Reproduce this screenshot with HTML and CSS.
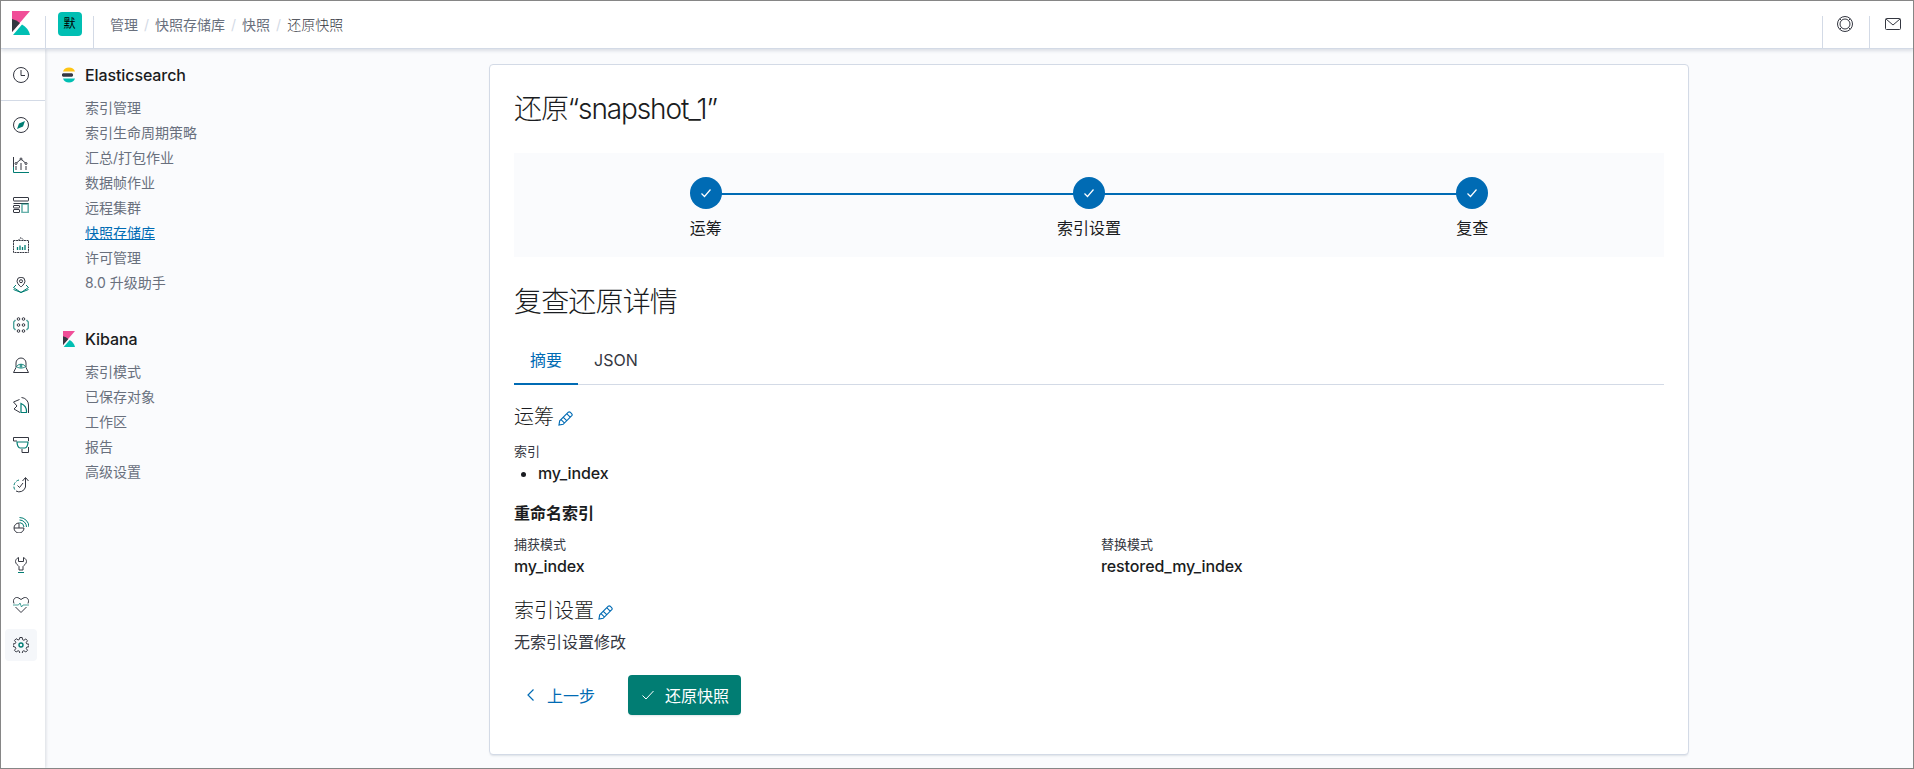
FILE: index.html
```html
<!DOCTYPE html>
<html lang="zh">
<head>
  <meta charset="UTF-8">
  <title>还原快照 - Kibana</title>
  <link rel="stylesheet" href="styles.css">
</head>
<body>

<header class="topbar">
  <div class="top-logo">
    <svg width="18" height="24" viewBox="0 0 18 24"><path fill="#f04e98" d="M0 0h18L0 21z"/><path fill="#343741" d="M0 8v13l8-9a16 16 0 0 0-8-4z"/><path fill="#00bfb3" d="M10 13.5 1 24h17a16 16 0 0 0-8-10.5z"/></svg>
  </div>
  <div class="space-cell"><span class="space-badge">默</span></div>
  <nav class="crumbs">
    <a>管理</a><i>/</i><a>快照存储库</a><i>/</i><a>快照</a><i>/</i><b>还原快照</b>
  </nav>
  <div class="top-right">
    <div class="top-btn">
      <svg width="16" height="16" viewBox="0 0 16 16" fill="none" stroke="#343741"><circle cx="8" cy="8" r="7.5"/><circle cx="8" cy="8" r="5"/><path d="M2.700 2.700l1.800 1.800M13.300 2.700l-1.800 1.800M2.700 13.300l1.800-1.800M13.300 13.300l-1.800-1.800"/></svg>
    </div>
    <div class="top-btn last">
      <svg width="16" height="12" viewBox="0 0 16 12" fill="none" stroke="#343741"><rect x=".5" y=".5" width="15" height="11" rx="1"/><path d="M1 1l7 6 7-6"/></svg>
    </div>
  </div>
</header>

<div class="main">
  <aside class="rail">
    <div class="rail-top">
      <svg class="ico" viewBox="0 0 16 16" fill="none" stroke="#343741"><circle cx="8" cy="8" r="7.5"/><path d="M8 3v5.5h4"/></svg>
    </div>
    <div class="rail-list">
      <span class="rail-item"><svg class="ico" viewBox="0 0 16 16" fill="none" stroke="#343741"><circle cx="8" cy="8" r="7.5"/><path fill="#017d73" stroke="none" d="M12 4 10 9.500 4 12 6 6.500z"/></svg></span>
      <span class="rail-item"><svg class="ico" viewBox="0 0 16 16" fill="none" stroke="#343741"><path d="M.5 0v10"/><path stroke="#017d73" d="M.5 10v5.500H16"/><path d="M3 6.500 8 2l5 4.500M3 9v4M8 6v7M13 9v4"/><circle cx="3" cy="6.500" r="1" fill="#fff"/><circle cx="8" cy="2" r="1" fill="#fff"/><circle cx="13" cy="6.500" r="1" fill="#fff"/></svg></span>
      <span class="rail-item"><svg class="ico" viewBox="0 0 16 16" fill="none" stroke="#343741"><rect x=".5" y=".5" width="15" height="3.500" rx=".5"/><path d="M.5 6.500h15"/><rect x=".5" y="8.500" width="6" height="2.500" rx=".5"/><rect x=".5" y="12.500" width="6" height="3" rx=".5"/><rect stroke="#017d73" stroke-width="1.600" opacity=".6" x="9" y="7" width="6.200" height="8.500"/></svg></span>
      <span class="rail-item"><svg class="ico" viewBox="0 0 16 16" fill="none" stroke="#343741" stroke-dasharray="2 .6"><path d="M.5 3.500h15v12H.5zM5 3.500l3-3 3 3"/><path stroke="#017d73" stroke-dasharray="none" stroke-width="1.300" d="M4.500 13V10M7 13V8.500M9.500 13V10M12 13V8"/></svg></span>
      <span class="rail-item"><svg class="ico" viewBox="0 0 16 16" fill="none" stroke="#343741"><path d="M8 10S4 6.800 4 4.200a4 4 0 0 1 8 0C12 6.800 8 10 8 10z"/><circle cx="8" cy="4.200" r="1.500"/><path stroke="#017d73" d="M3 8 .5 10.500 8 15.500l7.500-5L13 8M.5 12.500 8 15.500l7.500-3"/></svg></span>
      <span class="rail-item"><svg class="ico" viewBox="0 0 16 16" fill="none" stroke="#343741"><circle cx="5.500" cy="2" r="1.300"/><circle cx="10.500" cy="2" r="1.300"/><circle cx="5.500" cy="8" r="1.300"/><circle cx="10.500" cy="8" r="1.300"/><circle cx="5.500" cy="14" r="1.300"/><circle cx="10.500" cy="14" r="1.300"/><path stroke="#017d73" stroke-width="1.400" opacity=".7" d="M2.500 3 .7 5v6l1.800 2M13.500 3l1.800 2v6l-1.800 2"/></svg></span>
      <span class="rail-item"><svg class="ico" viewBox="0 0 16 16" fill="none" stroke="#343741"><path d="M.5 15.500h15L13 10.500V6a5 5 0 0 0-10 0v4.500z"/><path stroke="#017d73" d="M3.500 9.500c2-3 7-3 9 0-2 2-7 2-9 0z"/><circle cx="8" cy="9" r="1" stroke="#017d73"/></svg></span>
      <span class="rail-item"><svg class="ico" viewBox="0 0 16 16" fill="none" stroke="#343741"><path d="M6.500 2.500.5 5l3.500 4-3 3 6 3.500"/><path d="M8.500.5a7.500 7.500 0 0 1 7 7.500v8"/><path stroke="#017d73" stroke-width="1.200" d="M8 6.500v9h5.500A9 9 0 0 0 8 6.500z"/></svg></span>
      <span class="rail-item"><svg class="ico" viewBox="0 0 16 16" fill="none" stroke="#343741"><path d="M4 4H.5V.5h15V4M15.500 10v5.500H9V12"/><path stroke="#017d73" stroke-width="1.200" d="M4 5h11c0 3.500-1.500 6-3 6H7C5.500 11 4 8.500 4 5z"/></svg></span>
      <span class="rail-item"><svg class="ico" viewBox="0 0 16 16" fill="none" stroke="#343741"><path stroke="#017d73" stroke-dasharray="3 1.500" d="M6 3a6.500 6.500 0 0 0-4 10"/><path d="M3 14a6.500 6.500 0 0 0 9.500-4V1M9.500 4l3-3.500 3 3.500"/><path d="M4.500 8.500 6.500 10.500 10 6"/></svg></span>
      <span class="rail-item"><svg class="ico" viewBox="0 0 16 16" fill="none" stroke="#343741"><path d="M6 6A5 5 0 1 0 11 11H6zM1 11h5"/><path stroke="#017d73" d="M6.500 3a7 7 0 0 1 7 7M6.500.5A9.500 9.500 0 0 1 16 10M6.500 5.500a5 5 0 0 1 4.500 4.500"/></svg></span>
      <span class="rail-item"><svg class="ico" viewBox="0 0 16 16" fill="none" stroke="#343741"><path d="M5.500.5C3.500 1.500 2.500 3 2.500 4.500c0 2.500 3 4 3.500 5v3.500h4V9.500c.5-1 3.500-2.500 3.500-5 0-1.500-1-3-3-4v4h-5z"/><path stroke="#017d73" d="M5 15.500h6"/></svg></span>
      <span class="rail-item"><svg class="ico" viewBox="0 0 16 16" fill="none" stroke="#343741"><path d="M1 6.500C-1 2 3-1 6 1.200L8 2.500l2-1.300C13-1 17 2 15 6.500M2.500 10 8 15.500 13.500 10"/><path stroke="#017d73" opacity=".7" d="M0 8h5.500L7 6l1.500 4L10 8h6"/></svg></span>
      <span class="rail-item on"><svg class="ico" viewBox="0 0 16 16" fill="none" stroke="#343741"><path d="M6.800.5h2.400l.4 2.200 1.300.6 1.900-1.300 1.700 1.700-1.300 1.900.6 1.300 2.200.4v2.400l-2.200.4-.6 1.300 1.300 1.900-1.700 1.700-1.900-1.300-1.300.6-.4 2.200H6.800l-.4-2.200-1.300-.6-1.900 1.300-1.700-1.700 1.300-1.900-.6-1.300L0 9.400V7l2.200-.4.600-1.300L1.500 3.400l1.700-1.700 1.900 1.300 1.300-.6z"/><circle cx="8" cy="8" r="2" stroke="#017d73" stroke-width="1.400"/></svg></span>
    </div>
  </aside>

  <nav class="sidenav">
    <div class="nav-group">
      <h2>
        <svg width="14" height="16" viewBox="0 0 14 16"><path fill="#fec514" d="M1 4.500C1.800 2 4 .5 7 .5s5.200 1.500 6 4z"/><path fill="#343741" d="M1 6.200h9a2 2 0 0 1 0 3.600H1a2 2 0 0 1 0-3.600z"/><path fill="#00bfb3" d="M1 11.500C1.800 14 4 15.500 7 15.500s5.200-1.500 6-4z"/></svg>
        Elasticsearch
      </h2>
      <a>索引管理</a>
      <a>索引生命周期策略</a>
      <a>汇总/打包作业</a>
      <a>数据帧作业</a>
      <a>远程集群</a>
      <a class="current">快照存储库</a>
      <a>许可管理</a>
      <a>8.0 升级助手</a>
    </div>
    <div class="nav-group">
      <h2>
        <svg width="14" height="16" viewBox="0 0 18 24"><path fill="#f04e98" d="M0 0h18L0 21z"/><path fill="#343741" d="M0 8v13l8-9a16 16 0 0 0-8-4z"/><path fill="#00bfb3" d="M10 13.500 1 24h17a16 16 0 0 0-8-10.500z"/></svg>
        Kibana
      </h2>
      <a>索引模式</a>
      <a>已保存对象</a>
      <a>工作区</a>
      <a>报告</a>
      <a>高级设置</a>
    </div>
  </nav>

  <main class="content">
    <section class="panel">
      <h1>还原“snapshot_1”</h1>

      <div class="steps">
        <div class="step">
          <span class="dot"><svg width="16" height="16" viewBox="0 0 16 16" fill="none" stroke="#fff" stroke-width="1.200"><path d="M3.500 8.500 6.500 11.500 12.500 4.500"/></svg></span>
          <span class="step-name">运筹</span>
        </div>
        <div class="step">
          <span class="dot"><svg width="16" height="16" viewBox="0 0 16 16" fill="none" stroke="#fff" stroke-width="1.200"><path d="M3.500 8.500 6.500 11.500 12.500 4.500"/></svg></span>
          <span class="step-name">索引设置</span>
        </div>
        <div class="step">
          <span class="dot"><svg width="16" height="16" viewBox="0 0 16 16" fill="none" stroke="#fff" stroke-width="1.200"><path d="M3.500 8.500 6.500 11.500 12.500 4.500"/></svg></span>
          <span class="step-name">复查</span>
        </div>
      </div>

      <h3 class="sub-title">复查还原详情</h3>

      <div class="tabs">
        <span class="tab active">摘要</span>
        <span class="tab">JSON</span>
      </div>

      <h4 class="sec">运筹
        <svg class="pen" width="15" height="15" viewBox="0 0 16 16" fill="none" stroke="#006bb4" stroke-width="1.200"><path d="M1 15l.8-4.500L11 1.300a1.500 1.500 0 0 1 2 0l1.700 1.700a1.500 1.500 0 0 1 0 2L5.500 14.200zM3.500 9.500l3 3M6 7l3 3M9.500 3l3.500 3.500"/></svg>
      </h4>
      <div class="lbl">索引</div>
      <ul class="vals"><li>my_index</li></ul>

      <h5 class="rename">重命名索引</h5>
      <div class="pair">
        <div>
          <div class="lbl">捕获模式</div>
          <div class="val">my_index</div>
        </div>
        <div>
          <div class="lbl">替换模式</div>
          <div class="val">restored_my_index</div>
        </div>
      </div>

      <h4 class="sec">索引设置
        <svg class="pen" width="15" height="15" viewBox="0 0 16 16" fill="none" stroke="#006bb4" stroke-width="1.200"><path d="M1 15l.8-4.500L11 1.300a1.500 1.500 0 0 1 2 0l1.700 1.700a1.500 1.500 0 0 1 0 2L5.500 14.200zM3.500 9.500l3 3M6 7l3 3M9.500 3l3.500 3.500"/></svg>
      </h4>
      <p class="none">无索引设置修改</p>

      <div class="actions">
        <button class="btn-back">
          <svg width="12" height="14" viewBox="0 0 12 14" fill="none" stroke="#006bb4" stroke-width="1.200"><path d="M8.500 1.500 3 7l5.500 5.500"/></svg>
          上一步
        </button>
        <button class="btn-go">
          <svg width="14" height="14" viewBox="0 0 14 14" fill="none" stroke="#fff"><path d="M1.500 7.500 5 11l7.500-8"/></svg>
          还原快照
        </button>
      </div>
    </section>
  </main>
</div>

</body>
</html>
```

FILE: styles.css
```css
* {
  box-sizing: border-box;
}
body {
  margin: 0;
  height: 769px;
  overflow: hidden;
  display: flex;
  flex-direction: column;
  border: 1px solid #868686;
  font-family: Inter, "Noto Sans CJK SC", sans-serif;
  font-size: 14px;
  color: #343741;
  background: #fafbfd;
}
.topbar {
  height: 48px;
  flex: none;
  display: flex;
  background: #fff;
  border-bottom: 1px solid #d3dae6;
  box-shadow: 0 2px 3px rgba(152, 162, 179, 0.3);
  position: relative;
  z-index: 2;
}
.top-logo {
  width: 44px;
  padding: 10px 0 0 11px;
}
.space-cell {
  width: 49px;
  margin-top: 15px;
  border-left: 1px solid #d3dae6;
  border-right: 1px solid #d3dae6;
  display: flex;
  justify-content: center;
}
.space-badge {
  width: 24px;
  height: 24px;
  margin-top: -4px;
  border-radius: 4px;
  background: #00bfb3;
  color: #000;
  font-size: 12px;
  line-height: 24px;
  text-align: center;
}
.crumbs {
  display: flex;
  align-items: center;
  padding: 0 0 1px 16px;
  color: #69707d;
  font-size: 14px;
}
.crumbs i {
  font-style: normal;
  color: #d3dae6;
  margin: 0 6px;
}
.crumbs b {
  font-weight: 300;
  color: #343741;
}
.top-right {
  margin-left: auto;
  display: flex;
}
.top-btn {
  width: 47px;
  margin-top: 15px;
  padding-right: 2px;
  border-left: 1px solid #d3dae6;
  display: flex;
  justify-content: center;
  align-items: flex-start;
}
.top-btn.last {
  width: 44px;
  padding: 0 0 0 2px;
}
.top-btn.last svg {
  margin-top: 2px;
}
.main {
  flex: 1;
  display: flex;
  min-height: 0;
}
.rail {
  width: 44px;
  flex: none;
  background: #fff;
  box-shadow: 1px 0 3px rgba(152, 162, 179, 0.35);
}
.rail-top {
  height: 52px;
  padding-right: 4px;
  border-bottom: 1px solid #d3dae6;
  display: flex;
  align-items: center;
  justify-content: center;
}
.rail-list {
  padding: 4px 4px 0 0;
  display: flex;
  flex-direction: column;
  align-items: center;
}
.rail-item {
  width: 32px;
  height: 40px;
  display: flex;
  align-items: center;
  justify-content: center;
  border-radius: 4px;
}
.rail-item.on {
  height: 32px;
  margin-top: 4px;
  background: #f5f7fa;
}
.ico {
  width: 16px;
  height: 16px;
  display: block;
}
.sidenav {
  width: 360px;
  flex: none;
  padding: 14px 16px 0 17px;
}
.nav-group {
  margin-bottom: 32px;
}
.nav-group h2 {
  margin: 0 0 8px;
  font-size: 16px;
  font-weight: 500;
  line-height: 24px;
  letter-spacing: -0.1px;
  color: #1a1c21;
  display: flex;
  align-items: center;
  gap: 9px;
}
.nav-group h2 svg {
  flex: none;
}
.nav-group a {
  display: block;
  padding-left: 23px;
  font-size: 14px;
  line-height: 25px;
  color: #69707d;
}
.nav-group a.current {
  color: #006bb4;
  text-decoration: underline;
}
.content {
  flex: 1;
  min-width: 0;
  padding: 15px 0 0 84px;
}
.panel {
  width: 1200px;
  height: 691px;
  padding: 24px;
  background: #fff;
  border: 1px solid #d3dae6;
  border-radius: 4px;
  box-shadow: 0 2px 2px -1px rgba(152, 162, 179, 0.3);
}
h1 {
  margin: 0 0 22px;
  padding-bottom: 2px;
  font-size: 28px;
  font-weight: 300;
  line-height: 40px;
  letter-spacing: -0.04em;
  color: #1a1c21;
}
.steps {
  height: 104px;
  padding-top: 24px;
  background: #fafbfd;
  display: flex;
}
.step {
  flex: 1;
  display: flex;
  flex-direction: column;
  align-items: center;
  position: relative;
}
.step + .step::before {
  content: "";
  position: absolute;
  top: 16px;
  right: 50%;
  width: 100%;
  height: 2px;
  background: #006bb4;
}
.dot {
  width: 32px;
  height: 32px;
  border-radius: 50%;
  background: #006bb4;
  display: flex;
  align-items: center;
  justify-content: center;
  position: relative;
  z-index: 1;
}
.step-name {
  margin-top: 7px;
  font-size: 16px;
  line-height: 24px;
  color: #1a1c21;
}
.sub-title {
  margin: 27px 0 16px;
  font-size: 28px;
  font-weight: 300;
  line-height: 36px;
  letter-spacing: -0.03em;
  color: #1a1c21;
}
.tabs {
  display: flex;
  height: 49px;
  border-bottom: 1px solid #d3dae6;
}
.tab {
  padding: 0 16px;
  font-size: 16px;
  line-height: 48px;
  color: #343741;
}
.tab.active {
  color: #006bb4;
  border-bottom: 2px solid #006bb4;
  height: 49px;
}
.sec {
  margin: 18px 0 0;
  font-size: 20px;
  font-weight: 300;
  line-height: 28px;
  color: #1a1c21;
  display: flex;
  align-items: center;
  gap: 4px;
}
.pen {
  margin-top: 3px;
}
.lbl {
  font-size: 13px;
  line-height: 18px;
  color: #343741;
}
.sec + .lbl {
  margin-top: 11px;
}
.vals {
  margin: 0;
  padding: 0 0 0 24px;
  font-size: 16px;
  font-weight: 500;
  line-height: 26px;
  letter-spacing: -0.1px;
  color: #1a1c21;
}
.val {
  font-size: 16px;
  font-weight: 500;
  line-height: 26px;
  letter-spacing: -0.1px;
  color: #1a1c21;
}
.rename {
  margin: 15px 0 10px;
  font-size: 16px;
  font-weight: 600;
  line-height: 24px;
  color: #1a1c21;
}
.pair {
  display: grid;
  grid-template-columns: 1fr 1fr;
  column-gap: 24px;
  width: 1150px;
}
.none {
  margin: 5px 0 0;
  font-size: 16px;
  line-height: 24px;
  color: #343741;
}
.actions {
  margin-top: 21px;
  display: flex;
  gap: 12px;
}
button {
  height: 40px;
  font-family: inherit;
  font-size: 16px;
  border: none;
  border-radius: 4px;
  display: flex;
  align-items: center;
}
.btn-back {
  width: 102px;
  background: none;
  color: #006bb4;
  padding: 0 0 0 11px;
  gap: 10px;
}
.btn-go {
  width: 113px;
  background: #017d73;
  color: #fff;
  padding: 0 0 0 13px;
  gap: 10px;
  box-shadow: 0 2px 2px -1px rgba(152, 162, 179, 0.3);
}
```
